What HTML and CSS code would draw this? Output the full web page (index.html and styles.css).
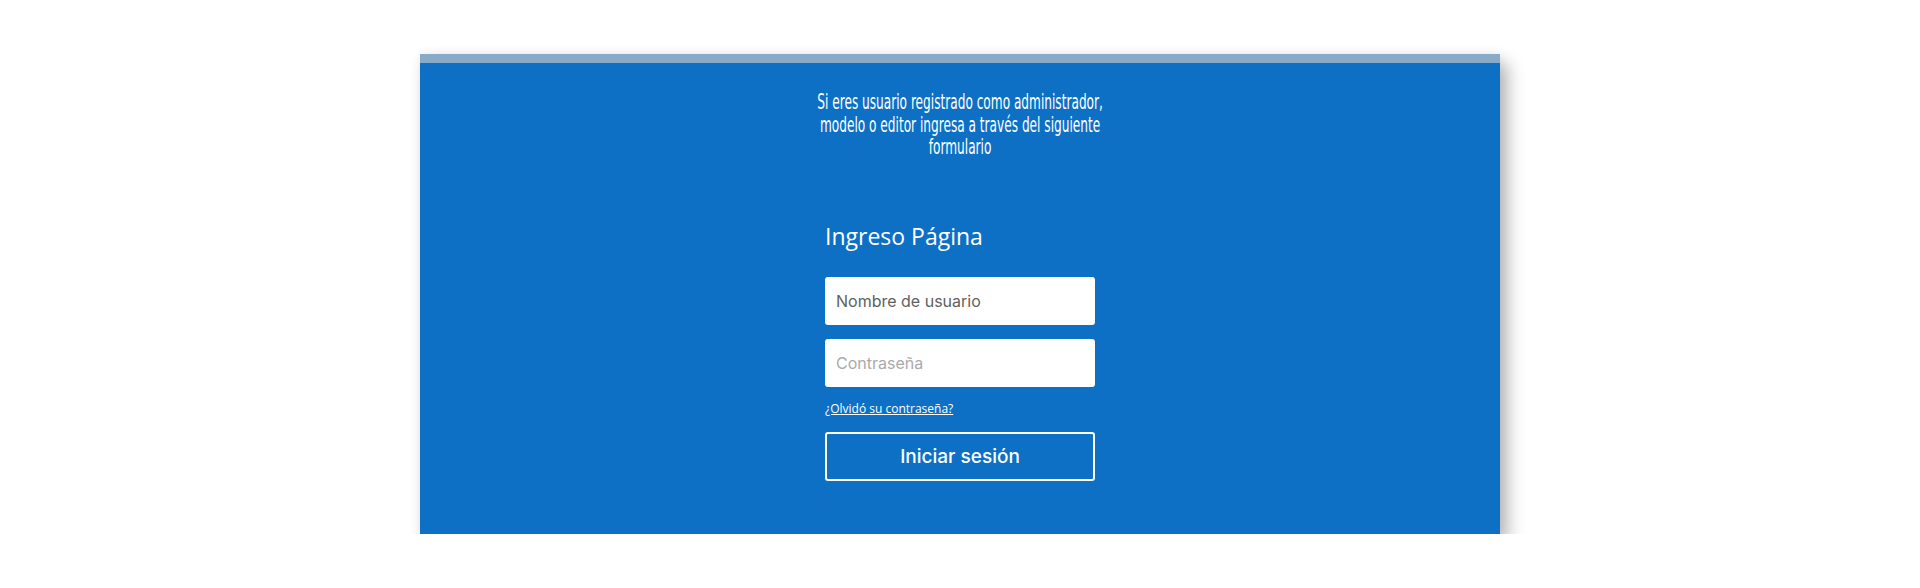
FILE: index.html
```html
<!DOCTYPE html>
<html lang="es">
<head>
    <meta charset="UTF-8">
    <meta name="viewport" content="width=device-width, initial-scale=1.0">
    <title>Ingreso Página</title>
    <link rel="stylesheet" href="styles.css">
</head>
<body>
    <div class="panel">
        <p class="intro">
            <span class="intro-text">Si eres usuario registrado como administrador,<br>modelo o editor ingresa a través del siguiente<br>formulario</span>
        </p>

        <form class="login" onsubmit="return false;">
            <h2 class="login-title">Ingreso Página</h2>
            <input type="text" class="field" value="Nombre de usuario">
            <input type="password" class="field" placeholder="Contraseña">
            <a href="#" class="forgot">¿Olvidó su contraseña?</a>
            <button type="submit" class="submit">Iniciar sesión</button>
        </form>
    </div>
</body>
</html>
```

FILE: styles.css
```css
body {
    margin: 0;
    background: #fff;
    font-family: 'Open Sans', sans-serif;
}

.panel {
    width: 1080px;
    height: 480px;
    box-sizing: border-box;
    margin: 54px auto 0;
    background: #0d70c5;
    border-top: 9px solid #8aabc8;
    box-shadow: 8px 9px 16px rgba(0, 0, 0, 0.28), 0 0 10px rgba(0, 0, 0, 0.06);
    color: #fff;
    display: flex;
    flex-direction: column;
    align-items: center;
}

.intro {
    margin: 28px 0 0;
    text-align: center;
    font-family: 'DejaVu Sans Condensed', sans-serif;
    font-size: 21px;
    line-height: 22.5px;
}

.intro-text {
    display: inline-block;
    transform: scaleX(0.643);
    white-space: nowrap;
}

.login {
    width: 270px;
    margin-top: 62px;
    display: flex;
    flex-direction: column;
}

.login-title {
    margin: 0 0 26px;
    font-size: 23px;
    font-weight: 400;
    line-height: 30px;
}

.field {
    height: 48px;
    margin: 0 0 14px;
    padding: 0 11px;
    border: none;
    border-radius: 3px;
    box-sizing: border-box;
    font-family: 'Inter', sans-serif;
    font-size: 16px;
    color: #616161;
}

.field::placeholder {
    color: #aaa;
}

.forgot {
    margin: -1px 0 15px;
    align-self: flex-start;
    color: #fff;
    font-size: 12px;
    line-height: 17px;
}

.submit {
    height: 49px;
    border: 2px solid #fff;
    border-radius: 3px;
    background: transparent;
    color: #fff;
    font-family: 'Inter', sans-serif;
    font-size: 19px;
    font-weight: 500;
    cursor: pointer;
}
```
